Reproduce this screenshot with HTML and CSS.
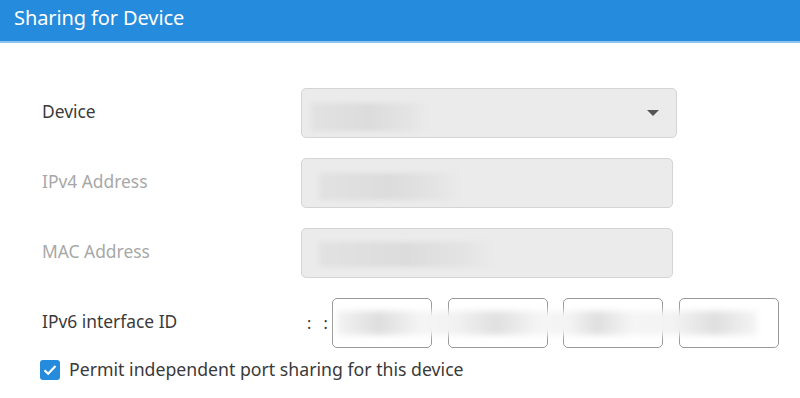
FILE: index.html
```html
<!DOCTYPE html>
<html>
<head>
<meta charset="utf-8">
<link rel="stylesheet" href="styles.css">
</head>
<body>
<header class="header"><h1 class="title">Sharing for Device</h1></header>
<main class="form">
  <div class="row row-device">
    <label class="label">Device</label>
    <div class="field select">
      <span class="blur blur-device"></span>
      <svg class="caret" width="12" height="6" viewBox="0 0 12 6"><path d="M0 0H12L6 6Z" fill="#555"/></svg>
    </div>
  </div>
  <div class="row">
    <label class="label muted">IPv4 Address</label>
    <div class="field input"><span class="blur blur-ipv4"></span></div>
  </div>
  <div class="row">
    <label class="label muted">MAC Address</label>
    <div class="field input"><span class="blur blur-mac"></span></div>
  </div>
  <div class="row row-ipv6">
    <label class="label">IPv6 interface ID</label>
    <div class="ipv6">
      <span class="colons">: :</span>
      <div class="seg"></div>
      <div class="seg"></div>
      <div class="seg"></div>
      <div class="seg"></div>
      <span class="blur blur-ipv6"></span>
    </div>
  </div>
  <div class="check-row">
    <span class="checkbox"><svg width="14" height="12" viewBox="0 0 14 12"><path d="M1.5 6.2L5.2 9.8L12.5 2" fill="none" stroke="#fff" stroke-width="2.2"/></svg></span>
    <span class="check-text">Permit independent port sharing for this device</span>
  </div>
</main>
</body>
</html>
```
FILE: styles.css
```css
* { box-sizing: border-box; }
body {
  margin: 0;
  background: #fff;
  font-family: "Source Sans Pro", "Noto Sans", sans-serif;
  color: #333;
  width: 800px;
  height: 398px;
  overflow: hidden;
}
.header {
  height: 43px;
  background: #258bdd;
  border-bottom: 2px solid #8ec3ee;
  padding: 0 14px;
  display: flex;
  align-items: center;
}
.title {
  margin: 0;
  margin-top: -6px;
  font-size: 20px;
  font-weight: 400;
  color: #fff;
  letter-spacing: -0.1px;
}
.form {
  padding: 45px 0 0 42px;
}
.row {
  display: flex;
  align-items: center;
  margin-bottom: 20px;
}
.label {
  width: 259px;
  font-size: 17.4px;
  color: #3a3a3a;
  margin-top: -4px;
}
.label.muted { color: #a8a8a8; }
.field {
  position: relative;
  height: 50px;
  background: #ebebeb;
  border: 1px solid #d4d4d4;
  border-radius: 5px;
}
.select {
  width: 376px;
  display: flex;
  align-items: center;
  justify-content: flex-end;
  padding-right: 17px;
}
.input { width: 372px; }
.blur {
  position: absolute;
  background: linear-gradient(90deg, #e2e2e2 0%, #dcdcdc 50%, #e4e4e4 85%, rgba(235,235,235,0) 100%);
  filter: blur(2px);
}
.blur-device { left: 9px; top: 14px; width: 116px; height: 28px; }
.blur-ipv4 { left: 17px; top: 14px; width: 140px; height: 27px; }
.blur-mac { left: 17px; top: 13px; width: 175px; height: 25px; }
.row-ipv6 { margin-bottom: 11px; }
.ipv6 {
  position: relative;
  display: flex;
  align-items: center;
}
.colons {
  width: 31px;
  font-size: 16px;
  color: #333;
  padding-left: 6px;
  word-spacing: 8px;
}
.seg {
  width: 100px;
  height: 50px;
  border: 1px solid #9a9a9a;
  border-radius: 5px;
  background: #fff;
  margin-right: 15.5px;
}
.blur-ipv6 {
  left: 36px;
  top: 13px;
  width: 420px;
  height: 24px;
  filter: blur(3px);
  background: linear-gradient(90deg, #f3f3f3 0%, #dedede 10%, #f5f5f5 20%, #f2f2f2 28%, #e0e0e0 38%, #f5f5f5 48%, #f4f4f4 55%, #dfdfdf 62%, #f5f5f5 70%, #f3f3f3 80%, #dfdfdf 90%, #f5f5f5 100%);
}
.check-row {
  display: flex;
  align-items: center;
  margin-left: -2px;
}
.checkbox {
  width: 20px;
  height: 20px;
  border-radius: 3px;
  background: #258bdd;
  display: flex;
  align-items: center;
  justify-content: center;
  margin-right: 9px;
}
.check-text {
  font-size: 17.7px;
  color: #3a3a3a;
  margin-top: -2px;
}
```
